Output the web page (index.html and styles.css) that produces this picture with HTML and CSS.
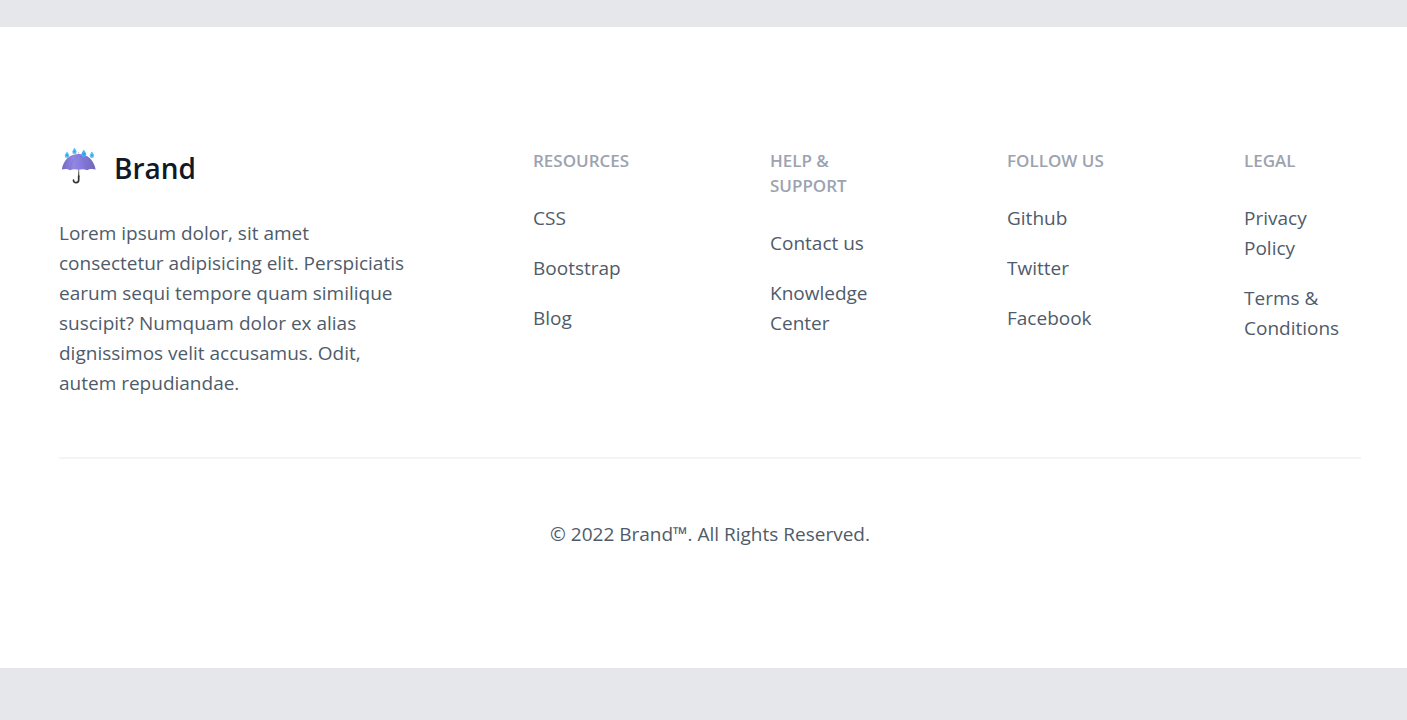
FILE: index.html
```html
<!DOCTYPE html>
<html lang="en">
<head>
<meta charset="utf-8">
<meta name="viewport" content="width=device-width, initial-scale=1">
<title>Brand</title>
<link rel="stylesheet" href="styles.css">
</head>
<body>
<footer class="footer">
  <div class="footer-grid">
    <section class="about">
      <div class="brand">
        <svg class="brand-logo" viewBox="0 -1 40 40" aria-hidden="true">
          <defs>
            <linearGradient id="canopy" x1="0" y1="0" x2="1" y2="0">
              <stop offset="0" stop-color="#7468c4"/>
              <stop offset=".35" stop-color="#9287e2"/>
              <stop offset=".6" stop-color="#857adb"/>
              <stop offset="1" stop-color="#7166b5"/>
            </linearGradient>
            <linearGradient id="shaft" x1="0" y1="0" x2="0" y2="1">
              <stop offset="0" stop-color="#b5b5b5"/>
              <stop offset=".5" stop-color="#777"/>
              <stop offset="1" stop-color="#333"/>
            </linearGradient>
          </defs>
          <rect x="19" y="3" width="1.2" height="4" fill="#cfcfd6"/>
          <rect x="19" y="20" width="1.3" height="8" fill="url(#shaft)"/>
          <path d="M19.700 27v4c0 3.400-5.200 3.500-5.200.2" fill="none" stroke="#333" stroke-width="1.700" stroke-linecap="round"/>
          <path d="M2.800 20.600C4.500 10.500 11 5 19.600 5S34.800 10.500 36.700 20.600c-3-.9-6.500-.7-8.700.6-2.500-1.100-5-1.300-8.400-.4-3.200-.9-6-.7-8.600.4-2-1.300-5-1.500-8.200-.6z" fill="url(#canopy)"/>
          <path d="M19.600 6c-5 3.500-8 8.500-8.600 15M19.600 6c5 3.500 8 8.500 8.400 15" fill="none" stroke="#7065bd" stroke-width=".3"/>
          <g fill="#5dc4f2">
            <path d="M8 2.600c1.500 2 2.200 3.200 2.200 4.200a2.200 2.200 0 0 1-4.400 0c0-1 .8-2.200 2.200-4.200z"/>
            <path d="M15.500-1.300c1.500 2 2.200 3.200 2.200 4.200a2.200 2.200 0 0 1-4.400 0c0-1 .8-2.200 2.200-4.200z"/>
            <path d="M24.800.8c1.700 2.300 2.400 3.600 2.400 4.800a2.400 2.400 0 0 1-4.800 0c0-1.200.8-2.500 2.400-4.800z" fill="#43b5ef"/>
            <path d="M32.900 2.600c1.500 2 2.200 3.200 2.200 4.200a2.200 2.200 0 0 1-4.400 0c0-1 .8-2.200 2.200-4.200z"/>
          </g>
          <g fill="#2b9fe3">
            <circle cx="8" cy="6.300" r="1"/>
            <circle cx="15.500" cy="2.400" r="1"/>
            <circle cx="24.800" cy="5" r="1.200"/>
            <circle cx="32.900" cy="6.300" r="1"/>
          </g>
        </svg>
        <span class="brand-name">Brand</span>
      </div>
      <p class="about-text">Lorem ipsum dolor, sit amet consectetur adipisicing elit. Perspiciatis earum sequi tempore quam similique suscipit? Numquam dolor ex alias dignissimos velit accusamus. Odit, autem repudiandae.</p>
    </section>
    <nav aria-labelledby="resources">
      <h2 class="column-title" id="resources">Resources</h2>
      <ul class="links">
        <li><a href="#">CSS</a></li>
        <li><a href="#">Bootstrap</a></li>
        <li><a href="#">Blog</a></li>
      </ul>
    </nav>
    <nav aria-labelledby="help">
      <h2 class="column-title" id="help">Help &amp; Support</h2>
      <ul class="links">
        <li><a href="#">Contact us</a></li>
        <li><a href="#">Knowledge Center</a></li>
      </ul>
    </nav>
    <nav aria-labelledby="follow">
      <h2 class="column-title" id="follow">Follow us</h2>
      <ul class="links">
        <li><a href="#">Github</a></li>
        <li><a href="#">Twitter</a></li>
        <li><a href="#">Facebook</a></li>
      </ul>
    </nav>
    <nav aria-labelledby="legal">
      <h2 class="column-title" id="legal">Legal</h2>
      <ul class="links">
        <li><a href="#">Privacy Policy</a></li>
        <li><a href="#">Terms &amp; Conditions</a></li>
      </ul>
    </nav>
  </div>
  <p class="copyright">© 2022 Brand™. All Rights Reserved.</p>
</footer>
</body>
</html>
```

FILE: styles.css
```css
* {
  box-sizing: border-box;
}

body {
  margin: 0;
  padding: 27px 0 52px;
  background: #e5e7eb;
  color: #4f5b6a;
  font-family: "Segoe UI", "Open Sans", "Noto Sans", sans-serif;
  font-size: 19px;
  line-height: 30px;
}

.footer {
  padding: 121px 46px 119px 59px;
  background: #fff;
}

.footer-grid {
  display: grid;
  grid-template-columns: repeat(6, minmax(0, 1fr));
  column-gap: 120px;
  padding-bottom: 59px;
  border-bottom: 2px solid #f3f4f6;
}

.about {
  grid-column: span 2;
}

.brand {
  display: flex;
  align-items: center;
  gap: 15px;
  margin-bottom: 30px;
}

.brand-logo {
  width: 40px;
  height: 40px;
  overflow: visible;
}

.brand-name {
  color: #111827;
  font-size: 28px;
  font-weight: 600;
  line-height: 40px;
}

.about-text,
.copyright {
  margin: 0;
}

.column-title {
  margin: 0 0 30px;
  color: #9ca3af;
  font-size: 17px;
  font-weight: 600;
  line-height: 25px;
  text-transform: uppercase;
}

.links {
  display: grid;
  gap: 20px;
  margin: 0;
  padding: 0;
  list-style: none;
}

.links a {
  color: inherit;
  text-decoration: none;
}

.copyright {
  padding-top: 60px;
  text-align: center;
}
```
